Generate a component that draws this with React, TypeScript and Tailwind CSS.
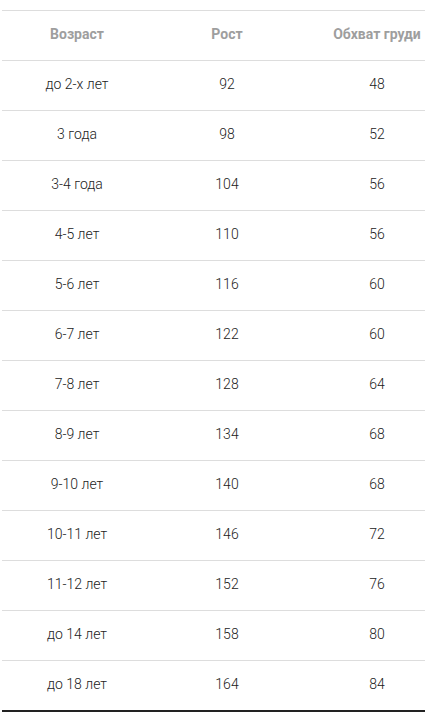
const rows: [string, string, string][] = [
  ["до 2-х лет", "92", "48"],
  ["3 года", "98", "52"],
  ["3-4 года", "104", "56"],
  ["4-5 лет", "110", "56"],
  ["5-6 лет", "116", "60"],
  ["6-7 лет", "122", "60"],
  ["7-8 лет", "128", "64"],
  ["8-9 лет", "134", "68"],
  ["9-10 лет", "140", "68"],
  ["10-11 лет", "146", "72"],
  ["11-12 лет", "152", "76"],
  ["до 14 лет", "158", "80"],
  ["до 18 лет", "164", "84"],
];

export default function App() {
  return (
    <div className="h-[713px] w-[425px] overflow-hidden bg-white pl-[2px] pt-[10px] font-['Roboto',sans-serif] text-[14px]">
      <div className="w-[450px]">
        <div className="grid h-[51px] grid-cols-3 items-center border-y border-[#dddddd] pb-[2px] text-center font-bold text-[#9e9e9e]">
          <div>Возраст</div>
          <div>Рост</div>
          <div>Обхват груди</div>
        </div>
        {rows.map(([age, height, chest], i) => (
          <div
            key={age}
            className={
              "grid grid-cols-3 items-center pb-[2px] text-center font-light text-[#222222] " +
              (i === rows.length - 1
                ? "h-[51px] border-b-2 border-[#222222]"
                : "h-[50px] border-b border-[#dddddd]")
            }
          >
            <div>{age}</div>
            <div>{height}</div>
            <div>{chest}</div>
          </div>
        ))}
      </div>
    </div>
  );
}
